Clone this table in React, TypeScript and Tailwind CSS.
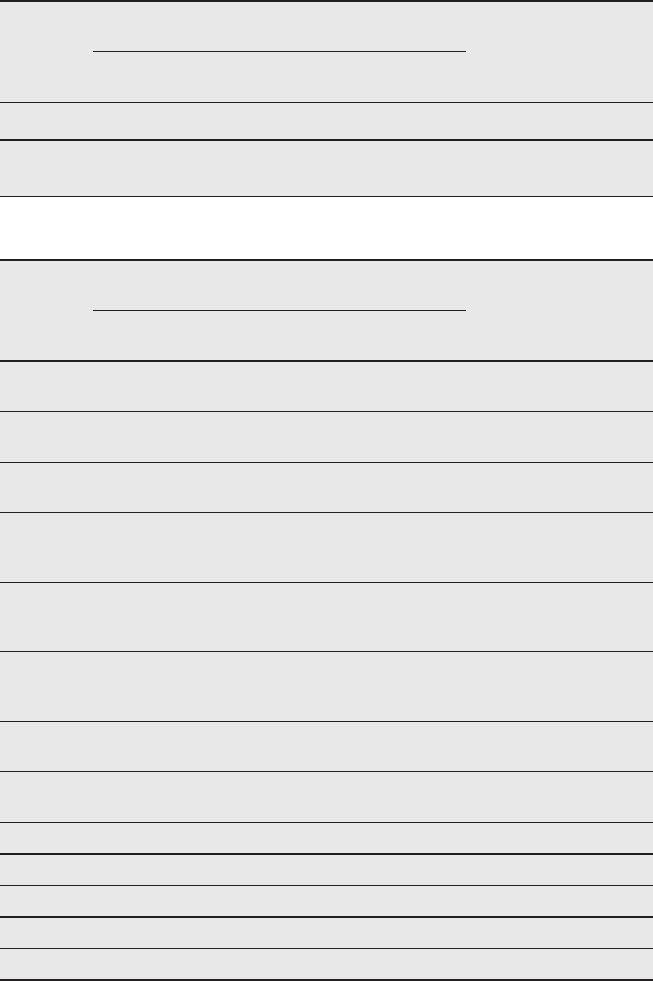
const line = 'border-[#231f20]'

function Row({ h, thick, white }: { h: string; thick?: boolean; white?: boolean }) {
  return (
    <div
      className={`${h} ${thick ? 'border-b-2' : 'border-b'} ${line} ${white ? 'bg-white' : 'bg-[#e8e8e8]'}`}
    />
  )
}

// header-ish block: middle column split in two by a shorter rule
function SplitRow({ h, top, thick }: { h: string; top: string; thick?: boolean }) {
  return (
    <div className={`${h} flex ${thick ? 'border-b-2' : 'border-b'} ${line} bg-[#e8e8e8]`}>
      <div className="w-[93px]" />
      <div className="w-[373px] flex flex-col">
        <div className={`${top} border-b ${line}`} />
        <div className="flex-1" />
      </div>
      <div className="flex-1" />
    </div>
  )
}

export default function App() {
  return (
    <div className="w-[653px] bg-[#e8e8e8] font-['Liberation_Sans',sans-serif]">
      <div className="h-[2px] bg-[#231f20]" />
      <SplitRow h="h-[101px]" top="h-[50px]" />
      <Row h="h-[38px]" thick />
      <Row h="h-[56px]" />
      <Row h="h-[64px]" thick white />
      <SplitRow h="h-[101px]" top="h-[50px]" thick />
      <Row h="h-[50px]" />
      <Row h="h-[51px]" />
      <Row h="h-[50px]" />
      <Row h="h-[70px]" />
      <Row h="h-[69px]" />
      <Row h="h-[70px]" />
      <Row h="h-[50px]" />
      <Row h="h-[51px]" />
      <Row h="h-[32px]" thick />
      <Row h="h-[31px]" />
      <Row h="h-[32px]" thick />
      <Row h="h-[31px]" />
      <Row h="h-[32px]" thick />
    </div>
  )
}
